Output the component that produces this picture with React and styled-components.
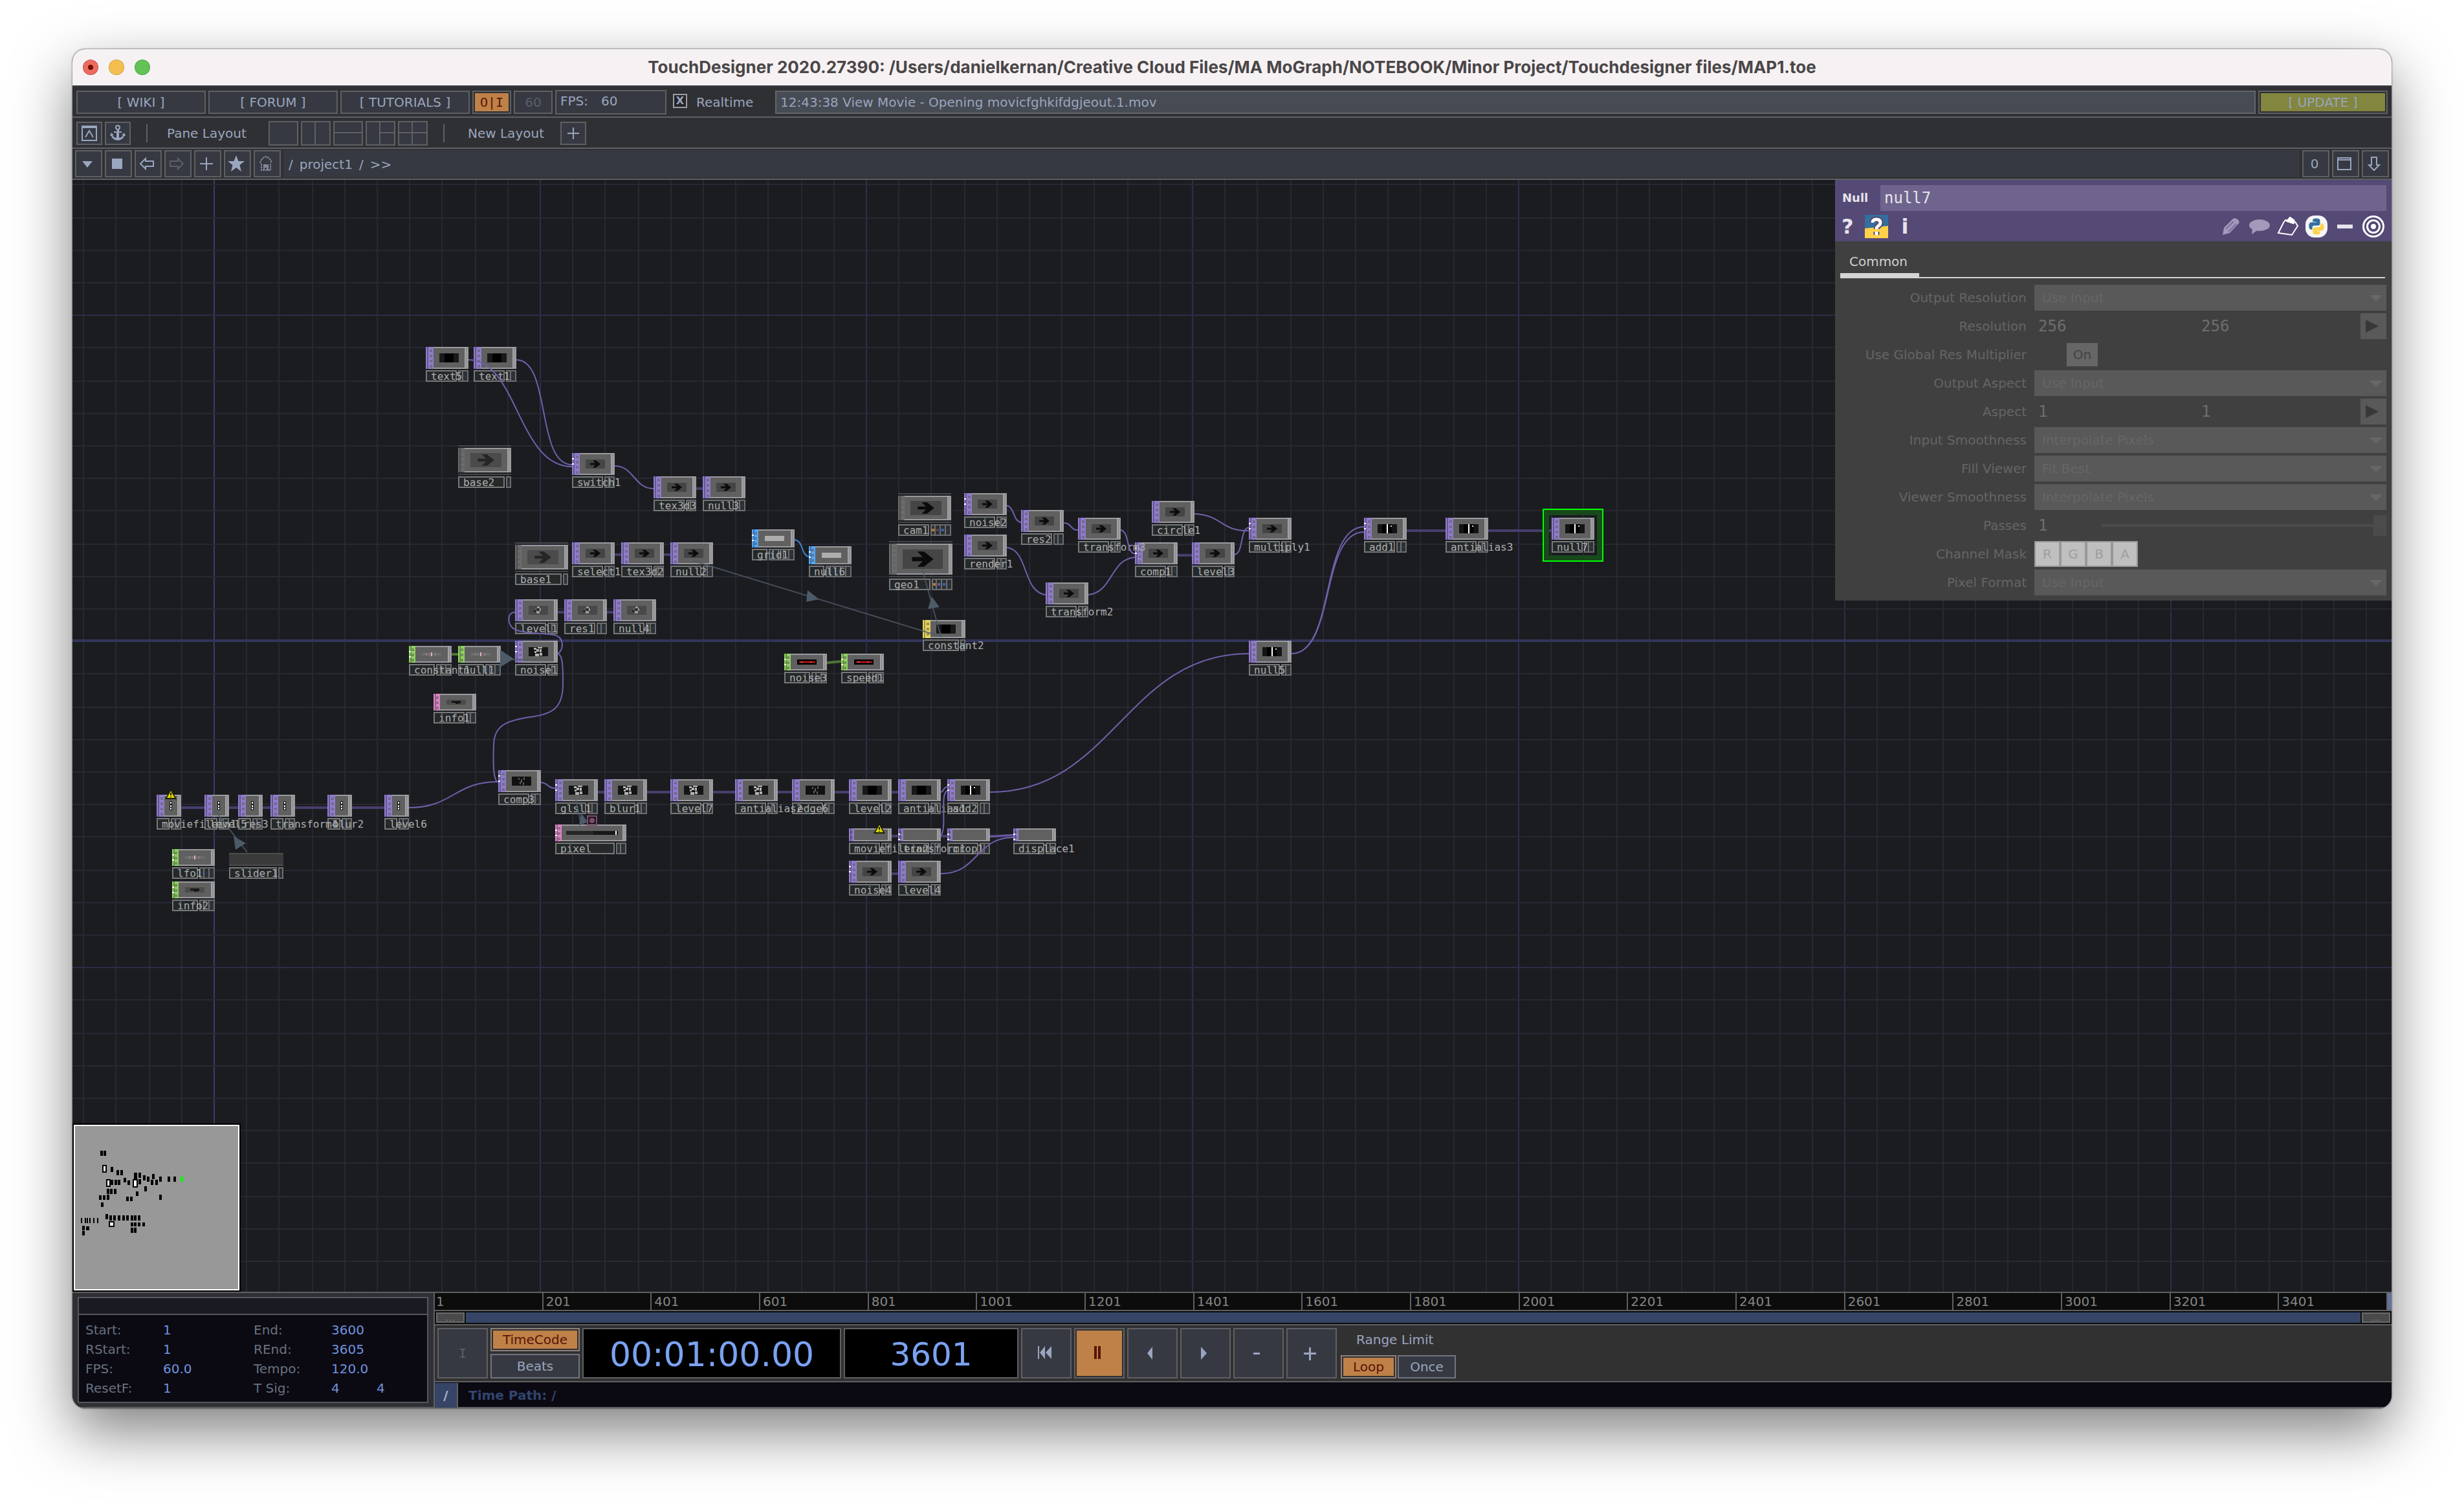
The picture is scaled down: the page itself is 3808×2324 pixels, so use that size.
import React from "react";
import styled, { createGlobalStyle, css } from "styled-components";

const SANS = '"DejaVu Sans", Verdana, sans-serif';
const MONO = '"DejaVu Sans Mono", monospace';
const C = {
  bar: "#2f3033",
  btn: "#363941",
  line: "#5f6063",
  text: "#9aa5bf",
  dim: "#5b5f69",
  orange: "#bf8147",
  orangeText: "#571509",
  blue: "#7ba2f2",
  ink: "#0b0912",
  top: "#8f7ccb",
  chop: "#8fd160",
  sop: "#55a5f5",
  dat: "#da84c4",
  mat: "#e6d45c",
};

const Global = createGlobalStyle`
  * { box-sizing: border-box; }
  body { margin: 0; background: #fff; font-family: ${SANS}; font-size: 20px; line-height: 24px; color: ${C.text}; }
  button, input, select { font: inherit; color: inherit; margin: 0; border-radius: 0; }
`;

/* ---------- shell ---------- */
const Desktop = styled.div`
  min-height: 100vh;
  padding: 76px 112px 148px;
  display: flex;
  flex-direction: column;
  overflow: hidden;
`;
const Window = styled.main`
  flex: 1;
  display: flex;
  flex-direction: column;
  border-radius: 20px;
  overflow: hidden;
  background: ${C.bar};
  box-shadow: 0 0 2px 1px rgba(0, 0, 0, 0.35), 0 36px 90px rgba(0, 0, 0, 0.5);
`;
const TitleBar = styled.header`
  height: 58px;
  display: grid;
  grid-template-columns: 1fr auto 1fr;
  align-items: center;
  padding: 0 16px;
  background: #f6f2f3;
  border-bottom: 2px solid #3a3a3d;
`;
const Lights = styled.div`
  display: flex;
  gap: 16px;
`;
const Light = styled.button`
  width: 24px;
  height: 24px;
  padding: 0;
  border-radius: 50%;
  border: 1px solid rgba(0, 0, 0, 0.15);
  background: ${(p) => p.$color};
  display: grid;
  place-items: center;
  &::after {
    content: "";
    width: 8px;
    height: 8px;
    border-radius: 50%;
    background: ${(p) => (p.$dot ? "#6b0f08" : "transparent")};
  }
`;
const Title = styled.h1`
  margin: 0;
  font: 700 26px/32px Inter, sans-serif;
  color: #4a4648;
  white-space: nowrap;
`;

/* ---------- tool rows ---------- */
const Bar = styled.div`
  display: flex;
  align-items: center;
  height: 48px;
  gap: 4px;
  padding: 2px 6px 0;
  background: ${C.bar};
  border-bottom: 2px solid ${C.line};
`;
const Button = styled.button`
  flex: none;
  display: grid;
  place-items: center;
  width: ${(p) => p.$w}px;
  height: ${(p) => p.$h || 36}px;
  padding: 0;
  border: 2px solid ${(p) => p.$edge || C.line};
  background: ${(p) => p.$bg || C.btn};
  color: ${(p) => p.$fg || C.text};
  font-family: ${(p) => (p.$mono ? MONO : SANS)};
  box-shadow: ${(p) => (p.$bg ? `inset 0 0 0 2px ${C.bar}` : "none")};
  & > svg { display: block; }
`;
const FpsBox = styled.label`
  display: flex;
  align-items: center;
  gap: 20px;
  width: 172px;
  height: 38px;
  padding: 0 6px 4px;
  border: 2px solid ${C.line};
  background: ${C.btn};
`;
const Bare = styled.input`
  width: ${(p) => (p.$w ? `${p.$w}px` : "100%")};
  min-width: 0;
  padding: 0;
  border: 0;
  background: none;
  color: ${(p) => p.$color || "inherit"};
`;
const Check = styled.label`
  display: flex;
  align-items: center;
  gap: 14px;
  width: 160px;
  padding-left: 6px;
  & > input {
    appearance: none;
    display: grid;
    place-items: center;
    width: 22px;
    height: 22px;
    margin-bottom: 4px;
    border: 2px solid #9c9ea2;
    background: #24252a;
  }
  & > input:checked::after {
    content: "X";
    font: 700 16px/16px ${SANS};
    color: ${C.text};
  }
`;
const Status = styled.input`
  flex: 1;
  min-width: 0;
  height: 36px;
  padding: 0 6px;
  border: 2px solid #62656b;
  background: #474b54;
  color: #9aa5bf;
`;
const Rule = styled.span`
  width: 2px;
  height: 28px;
  margin: 0 ${(p) => p.$gap}px 0 20px;
  background: ${C.line};
`;
const BarText = styled.span`
  width: ${(p) => p.$w}px;
`;
const PathBar = styled(Bar)`
  padding: 0 4px;
  & > button { padding-right: 4px; }
`;
const Path = styled.nav`
  flex: 1;
  display: flex;
  align-items: center;
  gap: 10px;
  height: 42px;
  padding: 2px 8px 0;
  background: ${C.btn};
  & > a { color: inherit; text-decoration: none; }
`;

const LAYOUTS = ["", "M22 1V37", "M1 18H45", "M22 1V37M22 18H45", "M22 1V37M1 18H45"];
const LayoutButton = styled.button`
  width: 46px;
  height: 38px;
  padding: 0;
  border: 0;
  background: ${C.btn};
  & > svg { display: block; }
`;

const Glyph = ({ d, fill, w = 2, size = 28, box = 28 }) => (
  <svg width={size} height={size} viewBox={`0 0 ${box} ${box}`} aria-hidden="true">
    <path d={d} fill={fill ? "currentColor" : "none"} stroke={fill ? "none" : "currentColor"} strokeWidth={w} />
  </svg>
);

/* ---------- network editor ---------- */
const Network = styled.section`
  position: relative;
  flex: 1;
  overflow: hidden;
  background: #1b1c20;
`;
const Drawing = styled.svg`
  position: absolute;
  inset: 0;
  width: 100%;
  height: 100%;
`;
/* Node names run over neighbouring nodes, so they stack inside one layer. */
const NodeLayer = styled.div`
  position: absolute;
  inset: 0;
  isolation: isolate;
`;

/* Scroll origin of the visible part of the network. */
const VIEW = { x: 112, y: 278, w: 3584, h: 1718 };
const CELL = 50.4;
const snap = (v) => 2 * Math.round(v / 2);

function Grid() {
  const lines = [];
  for (let i = -4; i < 67; i++) {
    const major = i % 10 === 0;
    lines.push(
      <rect key={`v${i}`} x={snap(330 + i * CELL) - VIEW.x} y="0" width="2" height="100%" fill={i === 0 ? "#3d3c68" : major ? "#2e2d4b" : "#272832"} />
    );
  }
  for (let i = -4; i < 31; i++) {
    const axis = i === 10;
    lines.push(
      <rect key={`h${i}`} y={snap(486.4 + i * CELL) - VIEW.y - (axis ? 2 : 0)} x="0" height={axis ? 4 : 2} width="100%" fill={axis ? "#33365a" : i % 10 === 0 ? "#2c2c48" : "#272832"} />
    );
  }
  return <Drawing aria-hidden="true">{lines}</Drawing>;
}

const KIND = {
  top: { color: C.top, w: 66, h: 34, strip: 12, flags: 2 },
  thin: { color: C.top, w: 38, h: 34, strip: 12, flags: 2 },
  flat: { color: C.top, w: 66, h: 20, strip: 8, flags: 2 },
  chop: { color: C.chop, w: 66, h: 26, strip: 10, flags: 3 },
  dat: { color: C.dat, w: 66, h: 26, strip: 10, flags: 2 },
  wide: { color: C.dat, w: 110, h: 26, strip: 10, flags: 2 },
  sop: { color: C.sop, w: 66, h: 28, strip: 10, flags: 5 },
  mat: { color: C.mat, w: 66, h: 28, strip: 12, flags: 1 },
  comp: { color: "#6c6c6e", w: 82, h: 46, strip: 10, flags: 1 },
  cam: { color: "#6c6c6e", w: 82, h: 46, strip: 10, flags: 4 },
  geo: { color: "#6c6c6e", w: 98, h: 56, strip: 12, flags: 4 },
  panel: { color: "#3c3c3c", w: 84, h: 20, strip: 0, flags: 1 },
};

const NODES = [
  ["text5", 658, 536, "top", "black"],
  ["text1", 732, 536, "top", "black"],
  ["base2", 708, 688, "comp", "arrowDim"],
  ["switch1", 884, 700, "top", "arrow", 1],
  ["tex3d3", 1010, 736, "top", "arrow"],
  ["null3", 1086, 736, "top", "arrow"],
  ["base1", 796, 838, "comp", "arrowDim"],
  ["select1", 884, 838, "top", "arrow"],
  ["tex3d2", 960, 838, "top", "arrow"],
  ["null2", 1036, 838, "top", "arrow"],
  ["level1", 796, 926, "top", "noise"],
  ["res1", 872, 926, "top", "noise"],
  ["null4", 948, 926, "top", "noise"],
  ["noise1", 796, 990, "top", "noiseHi", 1],
  ["constant1", 632, 998, "chop", "ticks", 1],
  ["null1", 708, 998, "chop", "ticks"],
  ["info1", 670, 1072, "dat", "blob"],
  ["grid1", 1162, 818, "sop", "plate", 1],
  ["null6", 1250, 844, "sop", "plate", 1],
  ["cam1", 1388, 762, "cam", "arrow"],
  ["geo1", 1374, 836, "geo", "arrow"],
  ["noise2", 1490, 762, "top", "arrow", 1],
  ["render1", 1490, 826, "top", "arrow"],
  ["res2", 1578, 788, "top", "arrow"],
  ["transform3", 1666, 800, "top", "arrow"],
  ["transform2", 1616, 900, "top", "arrow"],
  ["constant2", 1426, 958, "mat", "black"],
  ["noise3", 1212, 1010, "chop", "red", 1],
  ["speed1", 1300, 1010, "chop", "red", 1],
  ["circle1", 1780, 774, "top", "arrow"],
  ["comp1", 1754, 838, "top", "arrow", 1],
  ["level3", 1842, 838, "top", "arrow"],
  ["multiply1", 1930, 800, "top", "arrow", 1],
  ["null5", 1930, 990, "top", "bars"],
  ["add1", 2108, 800, "top", "bars", 1],
  ["antialias3", 2234, 800, "top", "bars"],
  ["null7", 2398, 800, "top", "bars"],
  ["moviefilein1", 242, 1228, "thin", "dash"],
  ["level5", 316, 1228, "thin", "dash"],
  ["res3", 368, 1228, "thin", "dash"],
  ["transform4", 418, 1228, "thin", "dash"],
  ["blur2", 506, 1228, "thin", "dash"],
  ["level6", 594, 1228, "thin", "dash"],
  ["comp3", 770, 1190, "top", "noiseDk", 1],
  ["glsl1", 858, 1204, "top", "noiseHi", 1],
  ["blur1", 934, 1204, "top", "noiseHi"],
  ["level7", 1036, 1204, "top", "noiseHi"],
  ["antialias2", 1136, 1204, "top", "noiseHi"],
  ["edge6", 1224, 1204, "top", "noiseDk"],
  ["level2", 1312, 1204, "top", "black"],
  ["antialias1", 1388, 1204, "top", "black"],
  ["add2", 1464, 1204, "top", "bars", 1],
  ["pixel", 858, 1274, "wide", "strip", 1],
  ["slider1", 354, 1318, "panel", "none"],
  ["lfo1", 266, 1312, "chop", "ticks", 1],
  ["info2", 266, 1362, "chop", "blob", 1],
  ["moviefilein2", 1312, 1280, "flat", "none"],
  ["transform1", 1388, 1280, "flat", "none", 1],
  ["crop1", 1464, 1280, "flat", "none", 1],
  ["displace1", 1566, 1280, "flat", "none", 1],
  ["noise4", 1312, 1330, "top", "arrow", 1],
  ["level4", 1388, 1330, "top", "arrow"],
].map(([name, x, y, kind, thumb, ports]) => ({ name, x, y, kind, thumb, ports, ...KIND[kind] }));

const NodeBox = styled.article`
  position: absolute;
  left: ${(p) => p.$x - VIEW.x}px;
  top: ${(p) => p.$y - VIEW.y}px;
  width: ${(p) => p.$w}px;
  display: flex;
  flex-direction: column;
  gap: 2px;
`;
const framed = css`
  border: 2px solid #454648;
  border-width: 2px 0;
  padding: 2px 0;
`;
const NodeFrame = styled.div`
  height: ${(p) => p.$h}px;
  display: flex;
  ${(p) => p.$comp && framed}
`;
const Tile = styled.div`
  flex: 1;
  display: flex;
  min-width: 0;
`;
const Strip = styled.div`
  position: relative;
  flex: none;
  width: ${(p) => p.$w}px;
  background-color: ${(p) => p.$color};
  background-image: linear-gradient(90deg, transparent 2px, rgba(0, 0, 0, 0.3) 2px 4px, transparent 4px),
    repeating-linear-gradient(180deg, transparent 0 4px, rgba(90, 90, 90, 0.55) 4px 8px);
  background-size: 100% 100%, 4px 100%;
  background-repeat: no-repeat;
  background-position: 0 0, calc(100% - 2px) 0;
  &::before {
    content: "";
    position: absolute;
    left: 0;
    top: 8px;
    width: 3px;
    height: 12px;
    background: ${(p) => (p.$ports ? "repeating-linear-gradient(180deg, #fff 0 2px, transparent 2px 8px)" : "none")};
  }
`;
const Viewer = styled.div`
  flex: 1;
  display: grid;
  place-items: center;
  border: 2px solid ${(p) => (p.$dark ? "#4c4c4c" : "#9a9a9d")};
  border-width: 2px 0;
  background: ${(p) => (p.$dark ? "#3a3a3a" : "#606060")};
  & > svg { display: block; }
`;
const Outlet = styled.div`
  flex: none;
  width: 6px;
  background: #a3a3a6;
  border-right: 2px solid #9a9a9e;
  box-shadow: inset 2px 2px 0 #a3a3a6, inset 3px 4px 0 #858588;
`;
const Label = styled.div`
  display: flex;
  gap: 2px;
  height: 18px;
`;
const Name = styled.span`
  flex: 1;
  min-width: 0;
  padding-left: 6px;
  border: 2px solid #77787a;
  background: #25292a;
  color: #adaeae;
  font: 16px/15px ${MONO};
  white-space: nowrap;
  & > span {
    position: relative;
    z-index: 1;
  }
`;
const Flags = styled.span`
  display: flex;
  border: 2px solid #6c6d6f;
  border-right-width: 0;
  background: #2c3032;
`;
const Flag = styled.i`
  width: ${(p) => (p.$first ? 6 : 8)}px;
  border-right: 2px solid #6c6d6f;
  display: grid;
  place-items: center;
  &::after {
    content: "";
    width: 4px;
    height: 4px;
    background: ${(p) => p.$dot || "#2a3644"};
  }
`;

const ARROW = "M7 5.500h8l-4-4h5l7 5.500-7 5.500h-5l4-4H7z";
function Thumb({ kind, node }) {
  if (kind === "none") return null;
  const narrow = node.kind === "thin";
  let w = narrow ? 4 : 30;
  let h = 14;
  if (node.kind === "comp" || node.kind === "cam") [w, h] = [48, 22];
  if (node.kind === "geo") [w, h] = [62, 30];
  if (node.kind === "wide") [w, h] = [80, 6];
  if (kind === "red" || kind === "ticks" || kind === "blob" || kind === "plate") h = 8;
  const vb = narrow ? "0 0 4 14" : kind === "strip" ? "0 0 80 6" : h === 8 ? "0 0 30 8" : "0 0 30 14";
  const shapes = {
    arrow: <><rect width="30" height="14" fill="#454545" /><path d={ARROW} fill="#0b0b0b" /></>,
    arrowDim: <><rect width="30" height="14" fill="#4b4b4b" /><path d={ARROW} fill="#242628" /></>,
    black: <><rect width="30" height="14" fill="#191919" /><rect x="8" width="14" height="14" fill="#000" /></>,
    bars: <><rect width="30" height="14" fill="#141414" /><rect x="7" width="15" height="14" fill="#000" /><rect x="14" width="2" height="14" fill="#fff" /><rect x="20" y="2" width="2" height="2" fill="#ddd" /></>,
    noise: <><rect width="30" height="14" fill="#494949" /><path d="M9 5h2v2H9zM13 1h4v3h-4zM17 4h2v4h-2zM12 8h5v4h-5z" fill="#989898" /><path d="M13 4h3v4h-3zM8 6h3v4H8z" fill="#2a2a2a" /></>,
    noiseHi: <><rect width="30" height="14" fill="#151515" /><path d="M8 1h4v3H8zM14 0h7v2h-7zM12 3h4v4h-4zM17 3h3v5h-3zM9 6h3v3H9zM10 10h6v4h-6zM17 9h4v4h-4z" fill="#b4b4b4" /></>,
    noiseDk: <><rect width="30" height="14" fill="#111" /><path d="M10 2h2v3h-2zM14 4h2v5h-2zM18 1h2v4h-2zM12 8h2v4h-2zM17 9h2v4h-2z" fill="#5c5c5c" /></>,
    ticks: <><rect y="2" width="30" height="4" fill="#6c6c6c" /><path d="M6 2h2v4H6zM11 2h1v4h-1zM20 2h2v4h-2z" fill="#858585" /><rect x="14" y="1" width="2" height="6" fill="#e0b3ab" /></>,
    blob: <><rect width="30" height="8" fill="#4c4c4c" /><path d="M8 2h14v4h-4v1h-4V5H8z" fill="#141616" /></>,
    plate: <rect width="30" height="8" fill="#adadad" />,
    red: <><rect width="30" height="8" fill="#000" /><path d="M3 4H28" stroke="#e01212" strokeWidth="2" /><path d="M5 4h4M20 4h3" stroke="#e58080" strokeWidth="1" /></>,
    strip: <><rect width="80" height="6" fill="#262626" /><rect x="42" width="38" height="6" fill="#181818" /><rect x="76" width="2" height="6" fill="#fff" /></>,
    dash: <><rect width="4" height="14" fill="#111" /><path d="M2 1v3M2 6v3M2 10v3" stroke="#e8e8e8" strokeWidth="2" /></>,
  };
  return (
    <svg width={w} height={h} viewBox={vb} preserveAspectRatio="none" aria-hidden="true">
      {shapes[kind]}
    </svg>
  );
}

const DOTS = { cam: ["#b9772a", "#4b4560", "#3565ad", "#2f3538"], geo: ["#b9772a", "#6657a3", "#3565ad", "#2f3538"] };
function Node({ node }) {
  const comp = ["comp", "cam", "geo"].includes(node.kind);
  return (
    <NodeBox $x={node.x} $y={node.y} $w={node.w}>
      <NodeFrame $h={node.h} $comp={comp}>
        <Tile>
          {node.strip > 0 && <Strip $w={node.strip} $color={node.color} $ports={node.ports} />}
          <Viewer $dark={node.kind === "panel"}>
            <Thumb kind={node.thumb} node={node} />
          </Viewer>
          {node.kind !== "panel" && <Outlet />}
        </Tile>
      </NodeFrame>
      <Label>
        <Name><span>{node.name}</span></Name>
        <Flags>
          {Array.from({ length: node.flags }, (_, i) => (
            <Flag key={i} $first={i === 0} $dot={DOTS[node.kind]?.[i]} />
          ))}
        </Flags>
      </Label>
    </NodeBox>
  );
}

const WIRES = [
  "M724 556C800 556 800 721 884 721",
  "M798 556C852 556 828 718 884 718",
  "M950 720C980 720 980 755 1010 755",
  "M862 1010C872 1004 872 984 856 981C830 978 800 978 792 970C784 962 784 946 796 946",
  "M862 1010C870 1012 870 1032 870 1056C870 1090 858 1102 826 1107C780 1113 764 1122 763 1150C762 1180 762 1206 770 1209",
  "M1556 781C1568 784 1566 806 1578 807",
  "M1644 808C1656 808 1654 819 1666 819",
  "M1732 819C1746 822 1740 854 1754 856",
  "M1556 846C1590 850 1580 915 1616 919",
  "M1682 919C1720 915 1716 864 1754 861",
  "M1908 857C1922 855 1916 817 1930 815",
  "M1846 794C1890 796 1886 821 1930 820",
  "M1996 1010C2064 1010 2040 814 2108 814",
  "M1996 1010C2064 1010 2040 822 2108 822",
  "M1530 1224C1720 1224 1740 1010 1930 1010",
  "M632 1248C700 1248 702 1208 770 1208",
  "M836 1209C848 1210 846 1218 858 1218",
  "M1454 1224C1460 1223 1456 1217 1464 1216",
  "M1454 1291C1464 1280 1452 1226 1464 1222",
  "M1530 1293C1545 1293 1550 1290 1566 1290",
  "M1454 1350C1512 1350 1508 1294 1566 1294",
];
const CHAINS = [
  "M1076 755H1086", "M950 857H960", "M1026 857H1036", "M862 946H872", "M938 946H948",
  "M1820 858H1842", "M2174 820H2234", "M2300 820H2398",
  "M280 1248H316M354 1248H368M406 1248H418M456 1248H506M544 1248H594",
  "M924 1224H934M1000 1224H1036M1102 1224H1136M1202 1224H1224M1290 1224H1312M1378 1224H1388",
  "M1378 1292H1388M1454 1292H1464M1530 1292L1566 1291M1378 1350H1388",
];

function Wires() {
  return (
    <Drawing aria-hidden="true">
      <g transform={`translate(${-VIEW.x} ${-VIEW.y})`} fill="none">
        <path d={CHAINS.join("")} stroke="#483d6c" strokeWidth="4" />
        <path d="M698 1011H708M1278 1024L1300 1022" stroke="#4c7534" strokeWidth="4" />
        <path d={WIRES.join("")} stroke="#7160ac" strokeWidth="2" />
        <path d="M1228 834C1242 836 1238 858 1250 860" stroke="#3f85d0" strokeWidth="2" />
        <path d="M1072 867L1456 984M1454 983L1425 879M790 1019H830M382 1317L332 1252M898 1274L890 1236" stroke="#4d5b68" strokeWidth="2" opacity="0.8" />
        <path d="M1248 912L1266 926L1246 930ZM1440 922L1452 938L1434 941ZM773 1004L794 1018L773 1031ZM361 1292L380 1303L364 1313ZM898 1256L908 1270L895 1276Z" fill="#4d5b68" />
        <rect x="908" y="1261" width="14" height="15" stroke="#83486f" strokeWidth="2" />
        <circle cx="915" cy="1268" r="4" fill="#83486f" />
        <rect x="2389" y="791" width="84" height="72" stroke="#17491a" strokeWidth="10" />
        <rect x="2385" y="787" width="92" height="80" stroke="#00ff00" strokeWidth="2" />
        {[[264, 1219], [1359, 1272]].map(([x, y]) => (
          <g key={x} transform={`translate(${x} ${y})`}>
            <path d="M0 0L9 16H-9Z" fill="#1c1b05" />
            <path d="M0 3L6 14H-6Z" fill="#d9d400" />
            <path d="M0 6V10M0 12V13" stroke="#1c1b05" strokeWidth="2" />
          </g>
        ))}
      </g>
    </Drawing>
  );
}

const Overview = styled.aside`
  position: absolute;
  left: 0;
  bottom: 0;
  width: 260px;
  height: 260px;
  border: 2px solid #000;
  & > svg { display: block; background: #989898; border: 2px solid #fff; }
`;
function MiniMap() {
  const sx = 256 / VIEW.w;
  const sy = 256 / VIEW.h;
  return (
    <Overview aria-label="Network overview">
      <svg width="256" height="256">
        {NODES.map((n) => {
          const open = n.kind === "comp" || n.kind === "geo" || n.kind === "wide";
          return (
            <rect
              key={n.name}
              x={Math.round((n.x - VIEW.x) * sx)}
              y={Math.round((n.y - VIEW.y) * sy)}
              width={Math.max(2, Math.round(n.w * sx) - 1)}
              height={Math.round((n.h + 20) * sy)}
              fill={n.name === "null7" ? "#00ff00" : open ? "#fff" : "#000"}
              stroke={open ? "#000" : "none"}
              strokeWidth="2"
            />
          );
        })}
      </svg>
    </Overview>
  );
}

/* ---------- parameter dialog ---------- */
const Params = styled.aside`
  position: absolute;
  top: 0;
  right: 0;
  width: 860px;
  background: #404040;
  color: #656565;
`;
const ParamHead = styled.div`
  height: 95px;
  padding: 8px;
  background: #554975;
  color: #e6e4ec;
`;
const NameRow = styled.label`
  display: grid;
  grid-template-columns: 59px 1fr;
  align-items: center;
  padding-left: 3px;
  font-weight: 700;
  font-size: 18px;
`;
const NameField = styled.input`
  width: 100%;
  height: 40px;
  padding: 0 6px;
  border: 0;
  background: #6f648d;
  font: 24px/28px ${MONO};
`;
const IconRow = styled.div`
  display: flex;
  align-items: center;
  height: 48px;
  gap: ${(p) => p.$gap || 0}px;
  padding-right: ${(p) => (p.$gap ? 2 : 0)}px;
`;
const IconButton = styled.button`
  width: ${(p) => p.$w}px;
  height: 40px;
  padding: 0 0 0 ${(p) => (p.$start ? 2 : 0)}px;
  border: 0;
  background: none;
  display: grid;
  align-items: center;
  justify-items: ${(p) => (p.$start ? "start" : "center")};
  font: 700 32px/36px ${SANS};
  & > svg { display: block; }
`;
const Spacer = styled.span`
  flex: 1;
`;
const Tabs = styled.div`
  display: flex;
  align-items: flex-end;
  height: 57px;
  margin: 0 10px 0 8px;
  &::after {
    content: "";
    flex: 1;
    height: 2px;
    background: #d4d4d4;
  }
`;
const Tab = styled.button`
  width: 122px;
  height: 46px;
  padding: 2px 4px 0 0;
  border: 0;
  border-bottom: 8px solid #d4d4d4;
  background: none;
  color: #d0d0d0;
`;
const ParamList = styled.div`
  display: grid;
  gap: 4px;
  padding: 10px 8px 8px;
`;
const ParamRow = styled.div`
  display: grid;
  grid-template-columns: 288px 1fr;
  gap: 12px;
  height: 40px;
  align-items: center;
  text-align: right;
`;
const Field = styled.div`
  display: flex;
  align-items: center;
  height: 40px;
`;
const Menu = styled.div`
  position: relative;
  flex: 1;
  &::after {
    content: "";
    position: absolute;
    right: 6px;
    top: 16px;
    border: 10px solid transparent;
    border-top-color: #676767;
    border-bottom: 0;
    pointer-events: none;
  }
`;
const Select = styled.select`
  display: block;
  appearance: none;
  width: 100%;
  height: 40px;
  padding: 0 12px;
  border: 0;
  background: #595959;
  color: #666;
  opacity: 1;
`;
const NumberBox = styled.input`
  width: ${(p) => p.$w || 252}px;
  padding: 0 6px;
  border: 0;
  background: none;
  color: #6e6e6e;
  font: 24px/28px ${MONO};
`;
const Step = styled.button`
  width: 40px;
  height: 40px;
  margin-left: auto;
  border: 0;
  padding: 0 0 0 8px;
  background: #595959;
  &::after {
    content: "";
    display: block;
    width: 0;
    border: 10px solid transparent;
    border-left: 20px solid #383838;
    border-right: 0;
  }
`;
const Toggle = styled.button`
  width: 48px;
  height: 36px;
  margin-left: 50px;
  padding: 0;
  border: 0;
  background: #666;
  color: #424242;
`;
const Range = styled.input`
  appearance: none;
  flex: 1;
  min-width: 0;
  height: 32px;
  background: linear-gradient(#4b4b4b, #4b4b4b) center / 100% 4px no-repeat;
  &::-webkit-slider-thumb {
    appearance: none;
    width: 20px;
    height: 32px;
    background: #4b4b4b;
  }
`;
const Mask = styled.button`
  width: 40px;
  height: 40px;
  padding: 0;
  border: 2px solid #999;
  background: #bfbfbf;
  color: #9e9e9e;
`;

const PARAMS = [
  ["Output Resolution", "menu", "Use Input"],
  ["Resolution", "pair", "256"],
  ["Use Global Res Multiplier", "toggle", "On"],
  ["Output Aspect", "menu", "Use Input"],
  ["Aspect", "pair", "1"],
  ["Input Smoothness", "menu", "Interpolate Pixels"],
  ["Fill Viewer", "menu", "Fit Best"],
  ["Viewer Smoothness", "menu", "Interpolate Pixels"],
  ["Passes", "slider", "1"],
  ["Channel Mask", "mask", "RGBA"],
  ["Pixel Format", "menu", "Use Input"],
];

function Param({ label, type, value }) {
  const id = label.toLowerCase().replace(/ /g, "-");
  return (
    <ParamRow>
      <label htmlFor={id}>{label}</label>
      <Field>
        {type === "menu" && (
          <Menu>
            <Select id={id} disabled defaultValue={value}><option>{value}</option></Select>
          </Menu>
        )}
        {type === "pair" && (
          <>
            <NumberBox id={id} defaultValue={value} />
            <NumberBox aria-label={`${label} 2`} $w={140} defaultValue={value} />
            <Step aria-label={`${label} presets`} />
          </>
        )}
        {type === "toggle" && <Toggle id={id}>{value}</Toggle>}
        {type === "slider" && (
          <>
            <NumberBox id={id} $w={104} defaultValue={value} />
            <Range type="range" aria-label={`${label} slider`} min="0" max="1" defaultValue="1" />
          </>
        )}
        {type === "mask" && [...value].map((c, i) => <Mask key={c} id={i ? undefined : id}>{c}</Mask>)}
      </Field>
    </ParamRow>
  );
}

const PY_BLUE = "M17.8 3c-7 0-6.6 3-6.6 3v3.200h6.800v1H8.500S4 9.700 4 17c0 7 4 6.700 4 6.700h2.300v-3.300s-.100-4 3.900-4h6.700s3.700.100 3.700-3.600V6.700S25.200 3 17.800 3z";
const PY_YELLOW = "M18.200 33c7 0 6.600-3 6.600-3v-3.200H18v-1h9.500S32 26.300 32 19c0-7-4-6.700-4-6.700h-2.300v3.300s.100 4-3.900 4h-6.700s-3.700-.100-3.700 3.600v6.100S10.800 33 18.200 33z";

function ParamDialog() {
  return (
    <Params>
      <ParamHead>
        <NameRow>
          Null
          <NameField defaultValue="null7" spellCheck="false" />
        </NameRow>
        <IconRow>
          <IconButton $w={38} $start aria-label="Help">?</IconButton>
          <IconButton $w={36} aria-label="Python help">
            <svg width="36" height="36" viewBox="0 0 36 36">
              <rect width="36" height="36" fill="#336f9f" />
              <path d="M0 21L36 17V36H0Z" fill="#ffd24a" />
              <path d="M12 12Q12 7 18 7T24 12Q24 15 21 17T18 22M18 26V31" fill="none" stroke="#554975" strokeWidth="9" />
              <path d="M12 12Q12 7 18 7T24 12Q24 15 21 17T18 22M18 26V31" fill="none" stroke="#fff" strokeWidth="5" />
            </svg>
          </IconButton>
          <IconButton $w={52} aria-label="Info">i</IconButton>
          <Spacer />
          <IconRow $gap={8}>
            <IconButton $w={36} aria-label="Edit">
              <svg width="28" height="28" viewBox="0 0 28 28">
                <path d="M1 27L3 16L17 2Q20 0 24 3T26 9L12 24Z" fill="#a399bb" />
                <path d="M6 18L18 6M10 22L22 10" stroke="#7b6f9c" strokeWidth="2" />
              </svg>
            </IconButton>
            <IconButton $w={36} aria-label="Comment">
              <svg width="34" height="28" viewBox="0 0 34 28">
                <ellipse cx="17" cy="12" rx="16" ry="9" fill="#a399bb" />
                <path d="M6 17L5 26L15 19Z" fill="#a399bb" />
              </svg>
            </IconButton>
            <IconButton $w={36} aria-label="Tag">
              <svg width="34" height="32" viewBox="0 0 34 32" fill="none" stroke="#fff">
                <path d="M13 6L28 9L32 15L23 29L2 26L10 10Z" strokeWidth="2" />
                <path d="M14 8L20 1L27 6L26 12Z" fill="#fff" strokeWidth="1" />
              </svg>
            </IconButton>
            <IconButton $w={36} aria-label="Python">
              <svg width="36" height="36" viewBox="0 0 36 36">
                <rect x="1" y="1" width="34" height="34" rx="14" fill="#f5f5f5" />
                <g transform="translate(3 3) scale(.83)">
                  <path d={PY_BLUE} fill="#336f9f" />
                  <path d={PY_YELLOW} fill="#ffd24a" />
                </g>
              </svg>
            </IconButton>
            <IconButton $w={36} aria-label="Collapse">
              <Glyph d="M6 18H30" w={6} size={36} box={36} />
            </IconButton>
            <IconButton $w={36} aria-label="Target">
              <svg width="36" height="36" viewBox="0 0 36 36" fill="none" stroke="#fff" strokeWidth="3">
                <circle cx="18" cy="18" r="15.500" />
                <circle cx="18" cy="18" r="9.500" />
                <circle cx="18" cy="18" r="4" fill="#fff" stroke="none" />
              </svg>
            </IconButton>
          </IconRow>
        </IconRow>
      </ParamHead>
      <Tabs>
        <Tab>Common</Tab>
      </Tabs>
      <ParamList>
        {PARAMS.map(([label, type, value]) => (
          <Param key={label} label={label} type={type} value={value} />
        ))}
      </ParamList>
    </Params>
  );
}

/* ---------- timeline ---------- */
const Timeline = styled.footer`
  display: grid;
  grid-template-columns: 560px 1fr;
  border-top: 2px solid ${C.line};
  border-bottom: 2px solid ${C.line};
`;
const Readout = styled.div`
  padding: 6px 8px;
  background: ${C.bar};
  border-right: 2px solid ${C.line};
`;
const ReadoutBox = styled.div`
  border: 2px solid #55565e;
  background: ${C.ink};
`;
const ReadoutHead = styled.div`
  height: 26px;
  background: #1a1a23;
  border-bottom: 2px solid #55565e;
`;
const ReadoutGrid = styled.div`
  display: grid;
  grid-template-columns: 120px 140px 120px 70px 60px;
  grid-auto-rows: 30px;
  align-items: center;
  padding: 8px 10px 6px;
  color: #67727f;
`;
const TimeMain = styled.div`
  display: flex;
  flex-direction: column;
  min-width: 0;
`;
const Ruler = styled.div`
  display: grid;
  grid-template-columns: repeat(18, 1fr) 6px;
  height: 28px;
  background: #0c0c0c;
  border-bottom: 2px solid ${C.line};
  color: #858585;
`;
const Tick = styled.span`
  padding: 1px 0 0 ${(p) => (p.$first ? 2 : 4)}px;
  border-right: 2px solid ${C.line};
`;
const Playhead = styled.span`
  background: #66719b;
`;
const Scroll = styled.div`
  display: grid;
  grid-template-columns: 44px 1fr 44px;
  gap: 2px;
  height: 22px;
  padding: 2px;
  background: #0c0c0c;
  border-bottom: 2px solid ${C.line};
`;
const ScrollEnd = styled.button`
  padding: 0;
  border: 2px solid #696a6c;
  background: #4a4a4a;
  color: #77787a;
  font-size: 16px;
  line-height: 8px;
`;
const ScrollBar = styled.div`
  background: #364566;
`;
const Controls = styled.div`
  display: flex;
  gap: 4px;
  height: 88px;
  padding: 4px;
  background: #313132;
  border-bottom: 2px solid ${C.line};
`;
const Stack = styled.div`
  display: flex;
  flex-direction: column;
  justify-content: space-between;
`;
const Clock = styled.output`
  display: grid;
  place-items: center;
  width: ${(p) => p.$w}px;
  padding-top: 4px;
  border: 2px solid ${C.line};
  background: #000;
  color: ${C.blue};
  font-size: ${(p) => p.$size}px;
  line-height: 60px;
`;
const Transport = styled(Button)`
  padding-right: 6px;
`;
const Limit = styled(Stack)`
  margin-left: 2px;
  padding-top: 6px;
  & > span { padding-left: 24px; }
`;
const Pair = styled.div`
  display: flex;
  gap: 2px;
`;
const TimePath = styled.div`
  display: flex;
  align-items: center;
  height: 38px;
  padding-top: 2px;
  background: ${C.ink};
  color: #32456e;
  font-weight: 700;
`;
const Root = styled.button`
  width: 36px;
  height: 38px;
  margin-right: 16px;
  padding: 0;
  border: 0;
  border-right: 2px solid ${C.line};
  background: #364566;
  color: #a9b4cd;
`;

const READOUT = [
  ["Start:", "1", "End:", "3600"],
  ["RStart:", "1", "REnd:", "3605"],
  ["FPS:", "60.0", "Tempo:", "120.0"],
  ["ResetF:", "1", "T Sig:", "4", "4"],
];
const TRANSPORT = [
  ["Rewind", "M4 3h2v20H4zM15 3v20L7 13zM25 3v20l-9-10z"],
  ["Pause", "M9 3h4v20H9zM15 3h4v20h-4z"],
  ["Step back", "M17 4v20L9 14z"],
  ["Play", "M10 4v20l9-10z"],
  ["Slower", "M9 13h10v3H9z"],
  ["Faster", "M13 5h3v8h8v3h-8v9h-3v-9H5v-3h8z"],
];

export default function App() {
  return (
    <Desktop>
      <Global />
      <Window>
        <TitleBar>
          <Lights>
            <Light $color="#ed6a5e" $dot aria-label="Close" />
            <Light $color="#f5bf4f" aria-label="Minimise" />
            <Light $color="#61c454" aria-label="Zoom" />
          </Lights>
          <Title>TouchDesigner 2020.27390: /Users/danielkernan/Creative Cloud Files/MA MoGraph/NOTEBOOK/Minor Project/Touchdesigner files/MAP1.toe</Title>
        </TitleBar>

        <Bar>
          <Button $w={200}>[ WIKI ]</Button>
          <Button $w={200}>[ FORUM ]</Button>
          <Button $w={200}>[ TUTORIALS ]</Button>
          <Button $w={60} $mono $bg={C.orange} $fg={C.orangeText}>O|I</Button>
          <Button $w={60} $fg={C.dim}>60</Button>
          <FpsBox>FPS:<Bare $w={60} defaultValue="60" /></FpsBox>
          <Check><input type="checkbox" defaultChecked />Realtime</Check>
          <Status aria-label="Status" readOnly value="12:43:38 View Movie - Opening movicfghkifdgjeout.1.mov" />
          <Button $w={200} $bg="#82863f">[ UPDATE ]</Button>
        </Bar>

        <Bar>
          <Button $w={40} aria-label="Maximise pane"><Glyph d="M3 3H25V25H3ZM3 5H25M8 20L14 10L20 20" /></Button>
          <Button $w={40} aria-label="Anchor">
            <svg width="28" height="28" viewBox="0 0 28 28" aria-hidden="true">
              <circle cx="14" cy="5" r="3" fill="none" stroke="currentColor" strokeWidth="2" />
              <path d="M13 7h3v4h4v2h-4v8q5-1 6-4h-2l4-4 2 5h-2q-2 6-10 7Q6 24 4 18H2l2-5 4 4H6q1 3 6 4v-8H8v-2h5z" fill="currentColor" />
            </svg>
          </Button>
          <Rule $gap={26} />
          <BarText $w={153}>Pane Layout</BarText>
          {LAYOUTS.map((d, i) => (
            <LayoutButton key={i} aria-label={`Layout ${i + 1}`}>
              <svg width="46" height="38" aria-hidden="true"><path d={`M1 1H45V37H1Z${d}`} fill="none" stroke={C.line} strokeWidth="2" /></svg>
            </LayoutButton>
          ))}
          <Rule $gap={32} />
          <BarText $w={139}>New Layout</BarText>
          <Button $w={40} aria-label="Add layout"><Glyph d="M14 5V23M5 14H23" /></Button>
        </Bar>

        <PathBar>
          <Button $w={42} $h={42} aria-label="Menu"><Glyph d="M6 10H22L14 20Z" fill /></Button>
          <Button $w={42} $h={42} aria-label="Stop"><Glyph d="M6 6H22V22H6Z" fill /></Button>
          <Button $w={42} $h={42} aria-label="Back"><Glyph d="M4 14L12 6V10H24V18H12V22Z" /></Button>
          <Button $w={42} $h={42} $fg={C.dim} aria-label="Forward"><Glyph d="M24 14L16 6V10H4V18H16V22Z" /></Button>
          <Button $w={42} $h={42} aria-label="Add"><Glyph d="M14 4V24M4 14H24" /></Button>
          <Button $w={42} $h={42} aria-label="Bookmark"><Glyph d="M14 1L17.500 10H27L19.500 16L22 26L14 20L6 26L8.500 16L1 10H10.500Z" fill /></Button>
          <Button $w={42} $h={42} $fg="#7f889b" aria-label="Home">
            <svg width="28" height="28" viewBox="0 0 28 28" aria-hidden="true">
              <path d="M5 13Q7 5 14 3Q21 5 23 13M7 14V24H21V14" fill="none" stroke="currentColor" strokeWidth="2" strokeDasharray="3 1" />
              <path d="M10 15H18V24H15V20H12V24H10Z" fill="currentColor" />
            </svg>
          </Button>
          <Path aria-label="Network path">
            <span>/</span><a href="#project1">project1</a><span>/</span><span>&gt;&gt;</span>
          </Path>
          <Button $w={42} $h={42}>0</Button>
          <Button $w={42} $h={42} aria-label="Float pane"><Glyph d="M4 5H24V23H4ZM4 8H24" /></Button>
          <Button $w={42} $h={42} aria-label="Collapse pane"><Glyph d="M14 24L6 16H10V4H18V16H22Z" /></Button>
        </PathBar>

        <Network>
          <Grid />
          <NodeLayer>
            {NODES.map((n) => <Node key={n.name} node={n} />)}
          </NodeLayer>
          <Wires />
          <MiniMap />
          <ParamDialog />
        </Network>

        <Timeline>
          <Readout>
            <ReadoutBox>
              <ReadoutHead />
              <ReadoutGrid>
                {READOUT.map(([a, av, b, bv, extra]) => (
                  <React.Fragment key={a}>
                    <label htmlFor={a}>{a}</label>
                    <Bare id={a} defaultValue={av} $color="#6f93de" />
                    <label htmlFor={b}>{b}</label>
                    <Bare id={b} defaultValue={bv} $color="#6f93de" />
                    {extra ? <Bare aria-label="Beat unit" defaultValue={extra} $color="#6f93de" /> : <span />}
                  </React.Fragment>
                ))}
              </ReadoutGrid>
            </ReadoutBox>
          </Readout>
          <TimeMain>
            <Ruler>
              {Array.from({ length: 18 }, (_, i) => <Tick key={i} $first={i === 0}>{i * 200 + 1}</Tick>)}
              <Playhead />
            </Ruler>
            <Scroll>
              <ScrollEnd aria-label="Range start">...</ScrollEnd>
              <ScrollBar />
              <ScrollEnd aria-label="Range end">...</ScrollEnd>
            </Scroll>
            <Controls>
              <Button $w={78} $h={78} $mono $fg={C.dim}>I</Button>
              <Stack>
                <Button $w={138} $bg={C.orange} $fg={C.orangeText} $edge="#8d8078">TimeCode</Button>
                <Button $w={138} $h={38} $edge="#72757f">Beats</Button>
              </Stack>
              <Clock $w={400} $size={52}>00:01:00.00</Clock>
              <Clock $w={270} $size={50}>3601</Clock>
              {TRANSPORT.map(([name, d]) => (
                <Transport key={name} $w={78} $h={78} aria-label={name} $bg={name === "Pause" ? C.orange : undefined} $fg={name === "Pause" ? C.orangeText : undefined}>
                  <Glyph d={d} fill />
                </Transport>
              ))}
              <Limit>
                <span>Range Limit</span>
                <Pair>
                  <Button $w={86} $bg={C.orange} $fg={C.orangeText} $edge="#8d8078">Loop</Button>
                  <Button $w={90} $edge="#72757f">Once</Button>
                </Pair>
              </Limit>
            </Controls>
            <TimePath><Root>/</Root>Time Path: /</TimePath>
          </TimeMain>
        </Timeline>
      </Window>
    </Desktop>
  );
}
